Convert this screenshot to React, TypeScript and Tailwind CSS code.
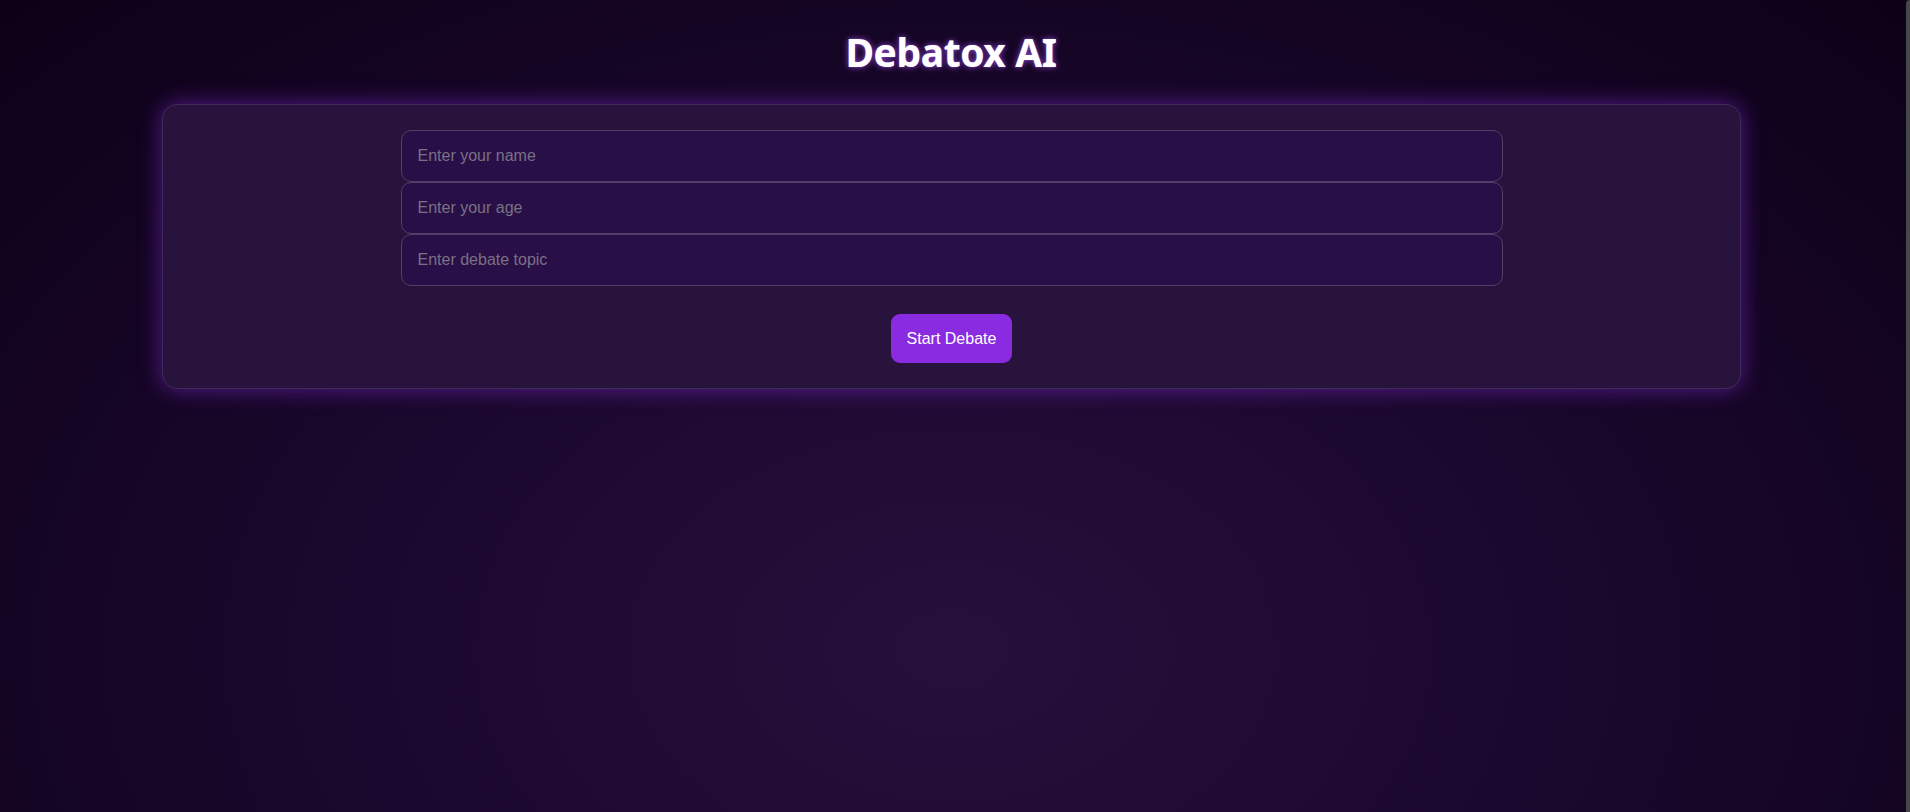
import { useState } from "react";

export default function App() {
  const [name, setName] = useState("");
  const [age, setAge] = useState("");
  const [topic, setTopic] = useState("");

  return (
    <div className="flex min-h-screen w-full bg-[#0e0219]">
      <main className="min-h-[812px] flex-1 bg-[radial-gradient(ellipse_at_50%_80%,#27103c_0%,#1b082e_45%,#0d0117_100%)]">
        <h1 className="pt-[28px] pr-[4px] text-center font-['Noto_Sans',sans-serif] text-[39px] font-bold leading-[48px] tracking-[-0.4px] text-white [text-shadow:0_0_6px_rgba(168,85,247,0.8),0_0_1px_rgba(200,150,255,0.8)]">
          Debatox AI
        </h1>

        <div className="mt-[28px] ml-[162px] w-[1579px] rounded-[15px] border border-[#3f2a5c] bg-[#27133c] px-6 pt-[25px] pb-[25px] shadow-[0_0_22px_rgba(138,43,226,0.55)]">
          <div className="mx-auto flex w-[1102px] flex-col">
            <input
              value={name}
              onChange={(e) => setName(e.target.value)}
              placeholder="Enter your name"
              className="h-[52px] rounded-[10px] border border-[#514068] bg-[#290f47] px-4 font-['Liberation_Sans',Arial,sans-serif] text-base text-white outline-none placeholder:text-[#7a7184]"
            />
            <input
              value={age}
              onChange={(e) => setAge(e.target.value)}
              placeholder="Enter your age"
              className="h-[52px] rounded-[10px] border border-[#514068] bg-[#290f47] px-4 font-['Liberation_Sans',Arial,sans-serif] text-base text-white outline-none placeholder:text-[#7a7184]"
            />
            <input
              value={topic}
              onChange={(e) => setTopic(e.target.value)}
              placeholder="Enter debate topic"
              className="h-[52px] rounded-[10px] border border-[#514068] bg-[#290f47] px-4 font-['Liberation_Sans',Arial,sans-serif] text-base text-white outline-none placeholder:text-[#7a7184]"
            />
          </div>

          <div className="mt-[28px] flex justify-center">
            <button className="h-[49px] rounded-[9px] bg-[#8a2be2] px-4 font-['Liberation_Sans',Arial,sans-serif] text-base text-white">
              Start Debate
            </button>
          </div>
        </div>
      </main>
      <div className="w-[4px] rounded-tl-[4px] bg-[#474747]" />
    </div>
  );
}
